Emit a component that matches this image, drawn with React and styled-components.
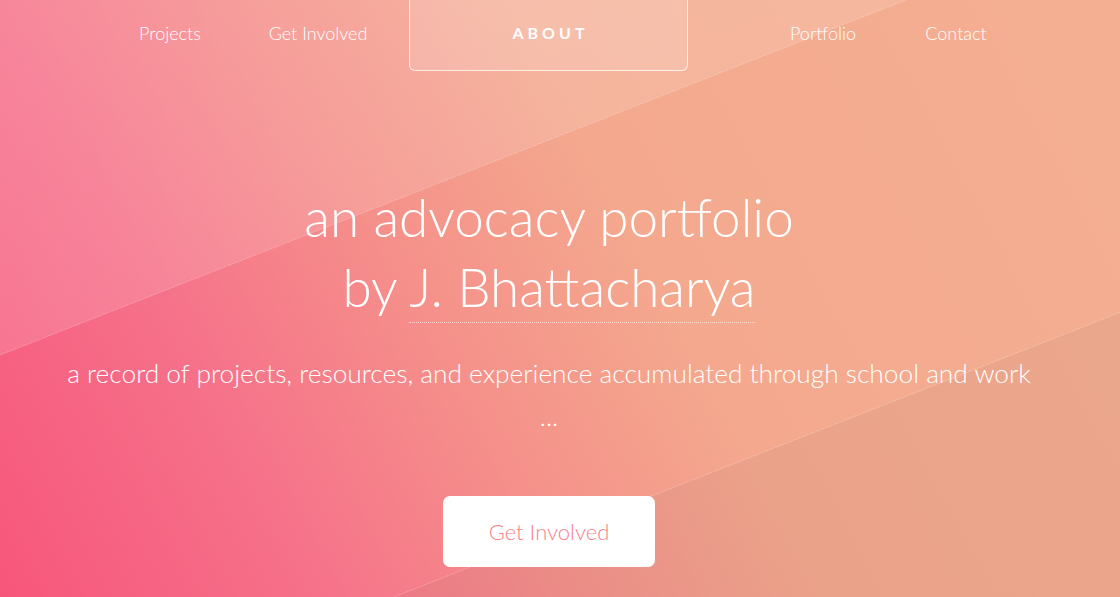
import React from "react";
import styled, { createGlobalStyle } from "styled-components";

const GlobalStyle = createGlobalStyle`
  html, body {
    margin: 0;
    padding: 0;
    overflow: hidden;
  }
  body {
    font-family: Lato, "Open Sans", "Liberation Sans", sans-serif;
    color: #fff;
  }
  * { box-sizing: border-box; }
`;

const Hero = styled.section`
  position: relative;
  width: 100%;
  height: 597px;
  overflow: hidden;
  display: flex;
  flex-direction: column;
  align-items: center;
  padding-right: 22px;
  background:
    linear-gradient(158.6deg,
      rgba(255, 255, 255, 0.15) 0px,
      rgba(255, 255, 255, 0.13) 330px,
      rgba(255, 255, 255, 0.3) 330px,
      rgba(255, 255, 255, 0) 331.5px,
      rgba(255, 255, 255, 0) 699px,
      rgba(255, 255, 255, 0.22) 699px,
      rgba(150, 110, 100, 0.1) 700.5px,
      rgba(150, 110, 100, 0.1) 100%),
    linear-gradient(62deg,
      #f7567b 0%,
      #f6718a 22%,
      #f5908a 40%,
      #f4a98e 58%,
      #f4af92 100%);
`;

const Nav = styled.nav`
  width: 100%;
  height: 71px;
  display: flex;
  align-items: center;
  padding-left: 110px;
  padding-bottom: 5px;
`;

const NavLink = styled.a`
  width: 120px;
  margin-left: ${(p) => p.$offset || 0}px;
  text-align: center;
  font-size: 18px;
  font-weight: 300;
  color: #fff;
  text-decoration: none;
  flex-shrink: 0;
`;

const AboutBox = styled.a`
  width: 279px;
  height: 81px;
  margin-top: -5px;
  margin-left: ${(p) => p.$offset || 0}px;
  flex-shrink: 0;
  display: flex;
  align-items: center;
  justify-content: center;
  padding-top: 4px;
  border: 1px solid rgba(255, 255, 255, 0.75);
  border-radius: 6px;
  background: rgba(255, 255, 255, 0.14);
  color: #fff;
  text-decoration: none;
  font-size: 16px;
  font-weight: 700;
  letter-spacing: 4px;
  text-indent: 4px;
`;

const Title = styled.h1`
  margin: 111px 0 0;
  font-size: 53px;
  line-height: 70px;
  font-weight: 300;
  text-align: center;
`;

const Author = styled.span`
  border-bottom: 1px dotted rgba(255, 255, 255, 0.6);
  padding-bottom: 4px;
`;

const Subtitle = styled.p`
  margin: 29.5px 0 0;
  font-size: 26.3px;
  line-height: 43px;
  font-weight: 300;
  text-align: center;
`;

const CtaButton = styled.a`
  margin-top: 58.5px;
  width: 212px;
  height: 71px;
  display: flex;
  align-items: center;
  justify-content: center;
  background: #fff;
  border-radius: 7px;
  color: #f77f89;
  font-size: 22px;
  font-weight: 300;
  text-decoration: none;
`;

export default function App() {
  return (
    <>
      <GlobalStyle />
      <Hero>
        <Nav>
          <NavLink href="#">Projects</NavLink>
          <NavLink href="#" $offset={28}>Get Involved</NavLink>
          <AboutBox href="#" $offset={31}>ABOUT</AboutBox>
          <NavLink href="#" $offset={75}>Portfolio</NavLink>
          <NavLink href="#" $offset={13}>Contact</NavLink>
        </Nav>
        <Title>
          an advocacy portfolio
          <br />
          by <Author>J. Bhattacharya</Author>
        </Title>
        <Subtitle>
          a record of projects, resources, and experience accumulated through school and work
          <br />
          ...
        </Subtitle>
        <CtaButton href="#">Get Involved</CtaButton>
      </Hero>
    </>
  );
}
